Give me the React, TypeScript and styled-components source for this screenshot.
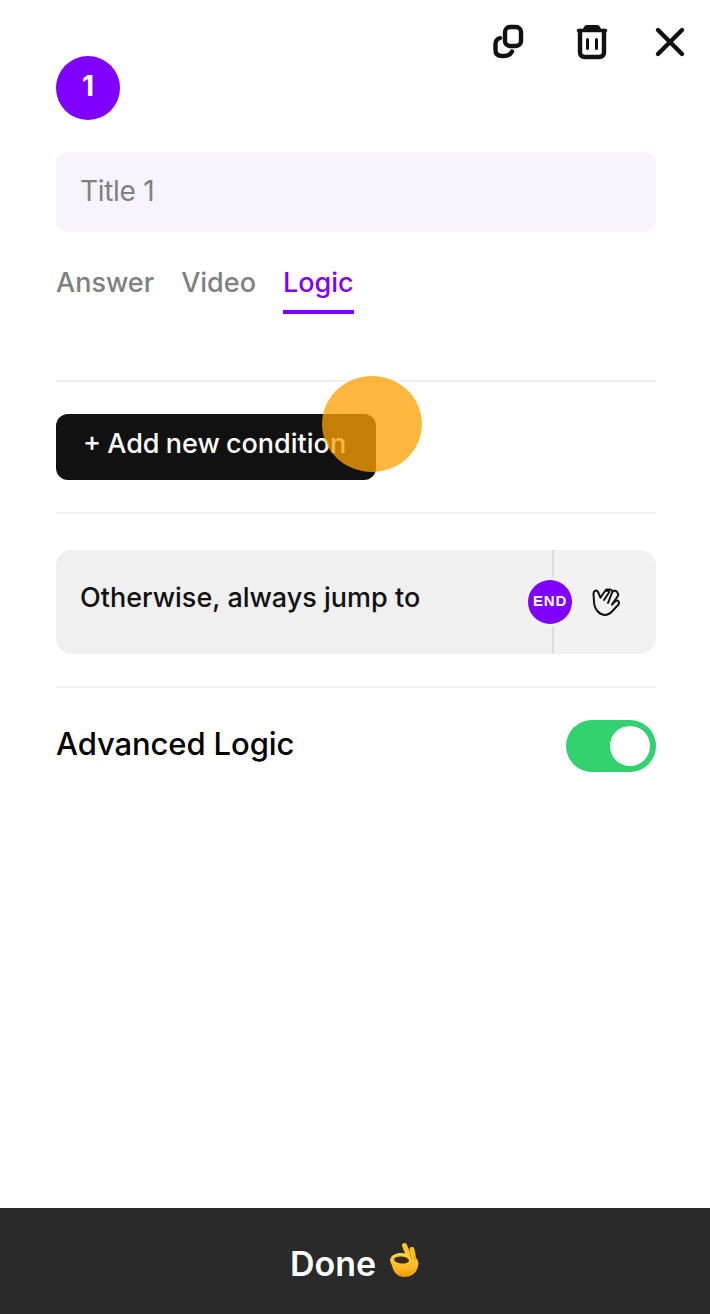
import React from "react";
import styled, { createGlobalStyle } from "styled-components";

const Global = createGlobalStyle`
  html, body { margin: 0; padding: 0; background: #fff; }
  body { font-family: Inter, "Noto Sans", "Liberation Sans", sans-serif; }
`;

const Page = styled.div`
  width: 710px;
  height: 1314px;
  display: flex;
  flex-direction: column;
  overflow: hidden;
  position: relative;
`;

const Content = styled.main`
  flex: 1;
  display: flex;
  flex-direction: column;
  padding: 0 54px 0 56px;
`;

const Toolbar = styled.div`
  height: 56px;
  margin-right: -30px;
  display: flex;
  justify-content: flex-end;
  align-items: flex-start;
  padding-top: 24px;
  box-sizing: border-box;
`;

const IconButton = styled.button<{ $gap: number }>`
  width: 32px;
  height: 36px;
  padding: 0;
  margin-left: ${(p) => p.$gap}px;
  border: 0;
  background: none;
  display: flex;
  align-items: center;
  justify-content: center;
  color: #111;
`;

const Badge = styled.div`
  width: 64px;
  height: 64px;
  border-radius: 50%;
  background: #7f00ff;
  color: #fff;
  font-size: 28px;
  font-weight: 700;
  display: flex;
  align-items: center;
  justify-content: center;
  padding-bottom: 4px;
  box-sizing: border-box;
`;

const TitleField = styled.div`
  margin-top: 32px;
  height: 80px;
  border-radius: 12px;
  background: #f8f3ff;
  color: #808080;
  font-size: 28px;
  line-height: 78px;
  padding-left: 24px;
  letter-spacing: -0.3px;
`;

const Tabs = styled.nav`
  margin-top: 32px;
  display: flex;
  gap: 27px;
  height: 50px;
`;

const Tab = styled.div<{ $active?: boolean }>`
  font-size: 27px;
  font-weight: 500;
  line-height: 38px;
  height: 46px;
  color: ${(p) => (p.$active ? "#7f00ff" : "#808080")};
  border-bottom: 4px solid ${(p) => (p.$active ? "#7f00ff" : "transparent")};
`;

const Divider = styled.hr`
  border: 0;
  height: 2px;
  margin: 0;
  background: #f0f0f0;
`;

const TopDivider = styled(Divider)`
  margin-top: 66px;
`;

const AddButton = styled.button`
  margin: 32px 0;
  width: 320px;
  height: 66px;
  border: 0;
  border-radius: 12px;
  background: #111;
  color: #fff;
  font: 500 27px/60px Inter, sans-serif;
  word-spacing: -1px;
  text-align: left;
  padding: 0 0 6px 27px;
  white-space: nowrap;
`;

const JumpCard = styled.div`
  margin: 36px 0 32px;
  height: 104px;
  border-radius: 16px;
  background: #f2f2f2;
  display: flex;
  overflow: hidden;
`;

const JumpLabel = styled.div`
  width: 498px;
  background: #f0f0f0;
  border-right: 2px solid #dcdcdc;
  color: #111;
  font-size: 27px;
  font-weight: 500;
  line-height: 96px;
  padding-left: 24px;
  box-sizing: border-box;
`;

const JumpTarget = styled.div`
  flex: 1;
  display: flex;
  align-items: center;
  padding: 0 0 0 37px;
  position: relative;
`;

const EndBadge = styled.div`
  position: absolute;
  left: -26px;
  top: 30px;
  width: 44px;
  height: 44px;
  border-radius: 50%;
  background: #7f00ff;
  box-shadow: 0 0 0 3px #f2f2f2;
  color: #fff;
  font-family: "Liberation Sans", Arial, sans-serif;
  font-size: 15px;
  font-weight: 700;
  letter-spacing: 0.8px;
  display: flex;
  align-items: center;
  justify-content: center;
  padding-bottom: 4px;
  box-sizing: border-box;
`;

const LogicRow = styled.div`
  margin-top: 32px;
  display: flex;
  align-items: center;
  justify-content: space-between;
  height: 52px;
`;

const LogicLabel = styled.div`
  font-size: 31px;
  font-weight: 500;
  color: #000;
  letter-spacing: -0.1px;
  padding-bottom: 6px;
`;

const Toggle = styled.div`
  width: 90px;
  height: 52px;
  border-radius: 26px;
  background: #33d16f;
  display: flex;
  align-items: center;
  justify-content: flex-end;
  padding-right: 6px;
  box-sizing: border-box;
`;

const Knob = styled.div`
  width: 40px;
  height: 40px;
  border-radius: 50%;
  background: #fff;
`;

const Footer = styled.footer`
  height: 106px;
  background: #2a2a2a;
  color: #fff;
  display: flex;
  align-items: center;
  justify-content: center;
  gap: 12px;
  font-size: 34px;
  font-weight: 600;
`;

const DoneLabel = styled.span`
  padding-top: 4px;
`;

const Touch = styled.div`
  position: absolute;
  left: 322px;
  top: 376px;
  width: 100px;
  height: 96px;
  border-radius: 50%;
  background: rgba(255, 162, 2, 0.76);
  pointer-events: none;
`;

const CopyIcon = () => (
  <svg width="32" height="36" viewBox="0 0 32 36" fill="none" stroke="currentColor" strokeWidth="4.400" strokeLinecap="round">
    <rect x="13" y="3" width="16" height="19" rx="5" />
    <path d="M8 14 C5 15 3.500 17 3.500 20 V26 C3.500 30 6 32 10 32 H12 C16 32 18.500 30.500 20 27.500" />
  </svg>
);

const TrashIcon = () => (
  <svg width="32" height="36" viewBox="0 0 32 36" fill="none" stroke="currentColor" strokeWidth="4.400" strokeLinecap="round">
    <path d="M2.500 6.500 H29.500" strokeWidth="3.500" />
    <path d="M7 6 C7 3 9 1 11 1 H21 C23 1 25 3 25 6 Z" stroke="none" fill="currentColor" />
    <path d="M4 7 V28 C4 31.500 6 33 9 33 H23 C26 33 28 31.500 28 28 V7" />
    <path d="M11.500 15.500 V24.500 M20.500 15.500 V24.500" strokeWidth="3" />
  </svg>
);

const CloseIcon = () => (
  <svg width="32" height="36" viewBox="0 0 32 36" fill="none" stroke="currentColor" strokeWidth="4.400" strokeLinecap="round">
    <path d="M4 6 L28 30 M28 6 L4 30" />
  </svg>
);

const WaveIcon = () => (
  <svg width="30" height="32" viewBox="0 0 30 32" fill="none" stroke="#111" strokeWidth="2" strokeLinecap="round" strokeLinejoin="round">
    <path d="M9.500 11.500 L7 6 C6 3.500 2.500 4.500 2.500 7.500 L3 16 C3.500 24 9 29 14 29 C17 29 19 27.500 21 25.500 L27.500 18.500 C29 16.500 27 13.500 24.500 15 L21 18.500" />
    <path d="M9.500 11.500 L14.500 4.500 C16 2.500 19 4 18 6.500 L13 14" />
    <path d="M16 5 C17.500 2.500 21 3 21.500 5.500 L17 17" />
    <path d="M21.500 5.500 C23 4 26 4.500 26.500 7 C27.500 8 27.500 9.500 26.500 10.500 L21 18.500" />
  </svg>
);

const OkHand = () => (
  <svg width="32" height="36" viewBox="0 0 32 36">
    <defs>
      <linearGradient id="okSkin" x1="0" y1="0" x2="0" y2="1">
        <stop offset="0" stopColor="#ffd447" />
        <stop offset="0.65" stopColor="#fdb61e" />
        <stop offset="1" stopColor="#ee960a" />
      </linearGradient>
    </defs>
    <path d="M16.500 2.500 L22 16" stroke="#fdc22f" strokeWidth="5" strokeLinecap="round" fill="none" />
    <path d="M24 6.500 L26 17" stroke="#fdbb26" strokeWidth="5" strokeLinecap="round" fill="none" />
    <path
      fill="url(#okSkin)"
      d="M2 17 C3 12 8 10 13 10 C17 10 20 11 22 13 L28 15 C30 17 31 20 30 23 C29 29 24 34 17 34 C11 34 7 31 5 26 C4.500 23 3 21 2 17 Z"
    />
    <ellipse cx="13.500" cy="17" rx="7.500" ry="3.500" fill="#3a2a12" transform="rotate(6 13.500 17)" />
    <path d="M22 11 L23.500 16 M26.500 13 L27 17" stroke="#e08a00" strokeWidth="1" strokeLinecap="round" fill="none" />
  </svg>
);

export default function App() {
  return (
    <Page>
      <Global />
      <Content>
        <Toolbar>
          <IconButton $gap={0} aria-label="Duplicate"><CopyIcon /></IconButton>
          <IconButton $gap={52} aria-label="Delete"><TrashIcon /></IconButton>
          <IconButton $gap={46} aria-label="Close"><CloseIcon /></IconButton>
        </Toolbar>
        <Badge>1</Badge>
        <TitleField>Title 1</TitleField>
        <Tabs>
          <Tab>Answer</Tab>
          <Tab>Video</Tab>
          <Tab $active>Logic</Tab>
        </Tabs>
        <TopDivider />
        <AddButton>+ Add new condition</AddButton>
        <Divider />
        <JumpCard>
          <JumpLabel>Otherwise, always jump to</JumpLabel>
          <JumpTarget>
            <EndBadge>END</EndBadge>
            <WaveIcon />
          </JumpTarget>
        </JumpCard>
        <Divider />
        <LogicRow>
          <LogicLabel>Advanced Logic</LogicLabel>
          <Toggle><Knob /></Toggle>
        </LogicRow>
      </Content>
      <Footer>
        <DoneLabel>Done</DoneLabel>
        <OkHand />
      </Footer>
      <Touch />
    </Page>
  );
}
